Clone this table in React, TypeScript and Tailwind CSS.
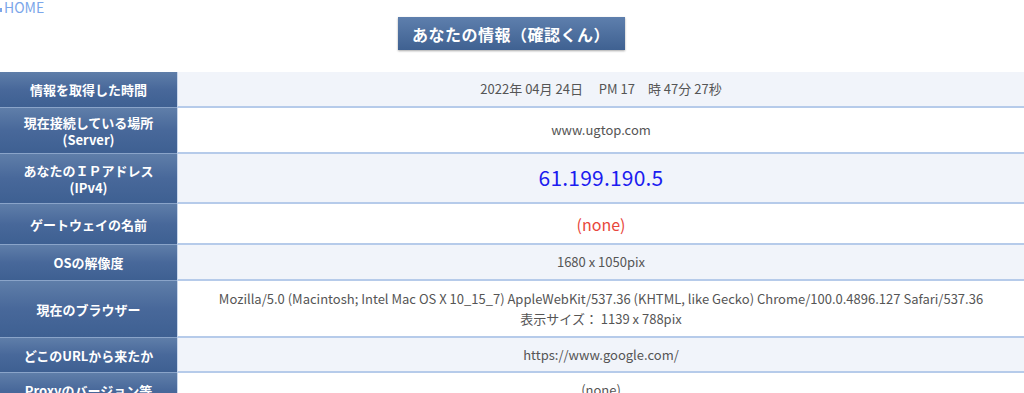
import React from 'react';

type Row = {
  label: React.ReactNode;
  value: React.ReactNode;
  h: string;
  shade: boolean;
};

const rows: Row[] = [
  {
    label: '情報を取得した時間',
    value: <span>2022年 04月 24日　 PM 17　時 47分 27秒</span>,
    h: 'h-[36px]',
    shade: true,
  },
  {
    label: (
      <>
        現在接続している場所
        <br />
        (Server)
      </>
    ),
    value: <span>www.ugtop.com</span>,
    h: 'h-[46px]',
    shade: false,
  },
  {
    label: (
      <>
        あなたのＩＰアドレス
        <br />
        (IPv4)
      </>
    ),
    value: <span className="text-[21px] text-[#1c1cf0] tracking-[0.2px]">61.199.190.5</span>,
    h: 'h-[50px]',
    shade: true,
  },
  {
    label: 'ゲートウェイの名前',
    value: <span className="text-[16px] text-[#e8473c]">(none)</span>,
    h: 'h-[41px]',
    shade: false,
  },
  {
    label: 'OSの解像度',
    value: <span>1680 x 1050pix</span>,
    h: 'h-[36px]',
    shade: true,
  },
  {
    label: '現在のブラウザー',
    value: (
      <span className="leading-[20px]">
        Mozilla/5.0 (Macintosh; Intel Mac OS X 10_15_7) AppleWebKit/537.36 (KHTML, like Gecko) Chrome/100.0.4896.127 Safari/537.36
        <br />
        表示サイズ： 1139 x 788pix
      </span>
    ),
    h: 'h-[57px]',
    shade: false,
  },
  {
    label: 'どこのURLから来たか',
    value: <span>https://www.google.com/</span>,
    h: 'h-[35px]',
    shade: true,
  },
  {
    label: 'Proxyのバージョン等',
    value: <span>(none)</span>,
    h: 'h-[36px]',
    shade: false,
  },
];

const App = () => {
  return (
    <div
      className="w-[1024px] h-[393px] overflow-hidden bg-white"
      style={{ fontFamily: '"Noto Sans CJK JP", "Noto Sans", sans-serif' }}
    >
      {/* home link, its icon is cut off at the left edge */}
      <div className="h-[14px] flex items-center text-[14px] leading-[14px] text-[#7ba6ea] whitespace-nowrap">
        <span className="w-[2px] h-[4px] mt-[6px] mr-[2px] bg-[#7ba6ea]" />
        HOME
      </div>

      <div className="flex justify-center mt-[3px]">
        <div className="w-[227px] h-[33px] flex items-center justify-center bg-gradient-to-b from-[#5e7fad] to-[#3f6191] shadow-[0_1px_2px_rgba(0,0,0,0.35)] text-white font-bold text-[16px] tracking-[0.5px] ml-[-2px]">
          あなたの情報（確認くん）
        </div>
      </div>

      <div className="mt-[22px] flex flex-col">
        {rows.map((r, i) => (
          <div key={i} className={`flex ${r.h}`}>
            <div className="w-[177px] shrink-0 flex items-center justify-center text-center bg-gradient-to-b from-[#5f7ea9] via-[#48689a] to-[#3e6092] border-b border-[#8aa4c9] text-white font-bold text-[13px] leading-[17px]">
              <div>{r.label}</div>
            </div>
            <div
              className={`flex-1 flex items-center justify-center text-center border-l border-[#c9d7ec] border-b-2 border-b-[#b6cbea] text-[13px] text-[#555555] ${
                r.shade ? 'bg-[#f1f4fa]' : 'bg-white'
              }`}
            >
              {r.value}
            </div>
          </div>
        ))}
      </div>
    </div>
  );
};

export default App;
